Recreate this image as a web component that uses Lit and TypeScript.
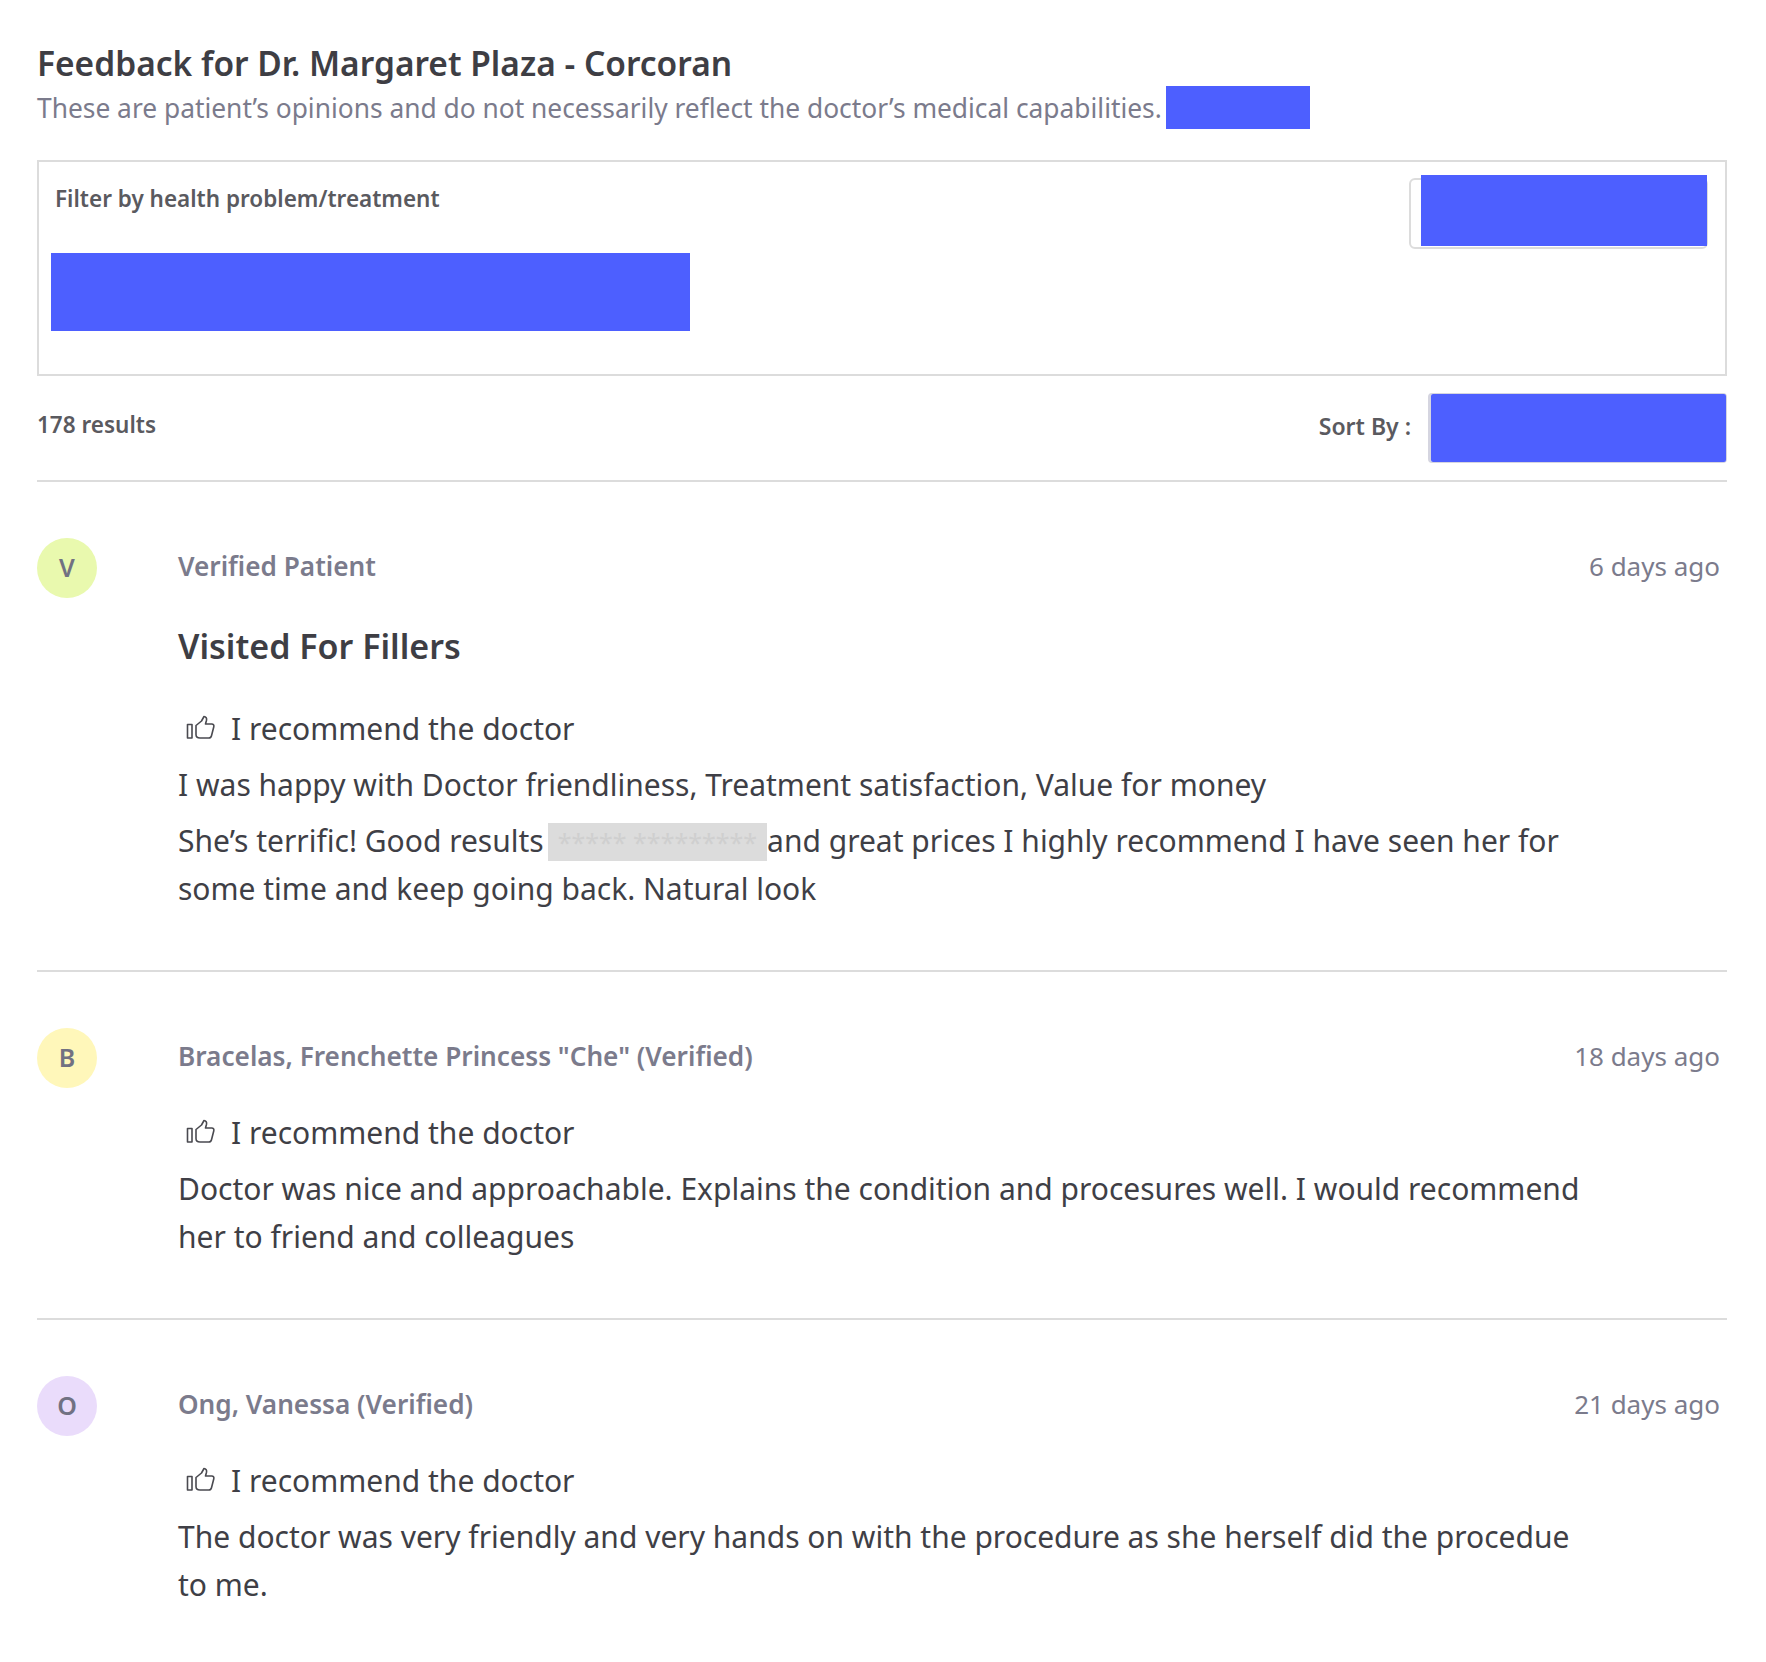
import { LitElement, html, css } from "lit";
import { customElement } from "lit/decorators.js";

const thumb = html`<svg class="thumb" viewBox="0 0 30 26" width="30" height="26" fill="none" stroke="#4a4a50" stroke-width="1.6" stroke-linejoin="round" stroke-linecap="round"><rect x="1.5" y="9.500" width="4.500" height="13.500"/><path d="M10 10.500l5.500-4.500 2.500-4.500c2 .2 3 1.700 2.500 3.800L19.500 9h6.300c1.500 0 2.400 1.300 2 2.700l-2.300 9c-.4 1.500-1.300 2.300-2.800 2.300h-8.700c-2.500 0-4-1.200-4-3.500z"/></svg>`;

const reviews = [
  { l: "V", c: "#e9f9ae", n: "Verified Patient", d: "6 days ago", t: "Visited For Fillers",
    body: [html`<p class="line">I was happy with Doctor friendliness, Treatment satisfaction, Value for money</p>`,
      html`<p class="body">She’s terrific! Good results<span class="mask">***** *********</span>and great prices I highly recommend I have seen her for some time and keep going back. Natural look</p>`] },
  { l: "B", c: "#fff7ba", n: 'Bracelas, Frenchette Princess "Che" (Verified)', d: "18 days ago", t: "",
    body: [html`<p class="body">Doctor was nice and approachable. Explains the condition and procesures well. I would recommend her to friend and colleagues</p>`] },
  { l: "O", c: "#eadcfb", n: "Ong, Vanessa (Verified)", d: "21 days ago", t: "",
    body: [html`<p class="body">The doctor was very friendly and very hands on with the procedure as she herself did the procedue to me.</p>`] },
];

@customElement("app-root")
export class AppRoot extends LitElement {
  static styles = css`
    :host { display: block; font-family: "Noto Sans", "Liberation Sans", sans-serif; background: #fff; color: #3f3f46; height: 1662px; box-sizing: border-box; padding: 43px 39px 0 37px; overflow: hidden; }
    p, h1, h2 { margin: 0; font-weight: inherit; }
    h1 { font-size: 33.5px; line-height: 40px; font-weight: 600; color: #3e3e44; }
    .sub { display: flex; align-items: center; gap: 4px; height: 44px; margin-top: 2px; font-size: 26.35px; color: #7b7b8c; }
    .sub > span:first-child { padding-top: 2px; }
    .blue { background: #4d5fff; display: block; }
    .sub .blue { width: 144px; height: 43px; }
    .filter { position: relative; margin-top: 31px; height: 216px; box-sizing: border-box; border: 2px solid #dcdcdc; }
    .filter-label { position: absolute; left: 16px; top: 22px; font-size: 22.5px; line-height: 30px; font-weight: 600; color: #5a5a5f; }
    .tag { position: absolute; left: 12px; top: 91px; width: 639px; height: 78px; }
    .search { position: absolute; right: 17px; top: 16px; width: 299px; height: 71px; box-sizing: border-box; border: 2px solid #dcdcdc; border-radius: 6px; }
    .search .blue { position: absolute; right: -1px; top: -5px; width: 286px; height: 71px; }
    .bar { display: flex; align-items: center; height: 106px; border-bottom: 2px solid #dcdcdc; font-size: 22.5px; font-weight: 600; color: #5a5a5f; box-sizing: border-box; }
    .bar .count { flex: 1; margin-top: -8px; }
    .bar .sort { margin-right: 17px; margin-top: -4px; font-size: 23px; }
    .select { width: 299px; height: 70px; box-sizing: border-box; border: 1px solid #d5d5e0; border-left-width: 3px; border-radius: 4px; }
    .select .blue { width: 100%; height: 100%; border-radius: 2px; }
    .review { display: flex; border-bottom: 2px solid #dcdcdc; padding: 56px 0 57px; }
    .review:last-child { border-bottom: none; }
    .avatar { flex: none; width: 60px; height: 60px; box-sizing: border-box; padding-bottom: 2px; border-radius: 50%; display: flex; align-items: center; justify-content: center; font-size: 25px; font-weight: 600; color: #717182; }
    .main { flex: 1; margin-left: 81px; min-width: 0; }
    .head { display: flex; justify-content: space-between; align-items: center; height: 60px; padding: 0 7px 4px 0; box-sizing: border-box; }
    .name { font-size: 26.2px; font-weight: 600; color: #7b7b8c; }
    .date { font-size: 26px; color: #7b7b8c; }
    h2 { font-size: 34px; line-height: 40px; font-weight: 600; color: #3e3e44; margin-top: 28px; margin-bottom: 38px; }
    .rec { display: flex; align-items: center; height: 48px; margin-top: 20px; font-size: 30px; }
    h2 + .rec { margin-top: 0; }
    .thumb { margin: 0 15px 0 8px; flex: none; }
    .line { font-size: 30px; line-height: 48px; margin-top: 8px; }
    .body { font-size: 30px; line-height: 48px; max-width: 1415px; margin-top: 8px; }
    .rec + p { margin-top: 9px; }
    .mask { background: #dcdcdc; color: #cfcfcf; display: inline-block; font-size: 25px; line-height: 38px; margin-left: 4px; padding: 0 10px; vertical-align: 0; }
  `;

  render() {
    return html`
      <h1>Feedback for Dr. Margaret Plaza - Corcoran</h1>
      <div class="sub"><span>These are patient’s opinions and do not necessarily reflect the doctor’s medical capabilities.</span><span class="blue"></span></div>
      <section class="filter">
        <div class="filter-label">Filter by health problem/treatment</div>
        <span class="blue tag"></span>
        <div class="search"><span class="blue"></span></div>
      </section>
      <div class="bar">
        <span class="count">178 results</span>
        <span class="sort">Sort By :</span>
        <div class="select"><span class="blue"></span></div>
      </div>
      ${reviews.map(r => html`
        <article class="review">
          <div class="avatar" style="background:${r.c}">${r.l}</div>
          <div class="main">
            <div class="head"><span class="name">${r.n}</span><span class="date">${r.d}</span></div>
            ${r.t ? html`<h2>${r.t}</h2>` : ""}
            <div class="rec">${thumb}<span>I recommend the doctor</span></div>
            ${r.body}
          </div>
        </article>`)}
    `;
  }
}
